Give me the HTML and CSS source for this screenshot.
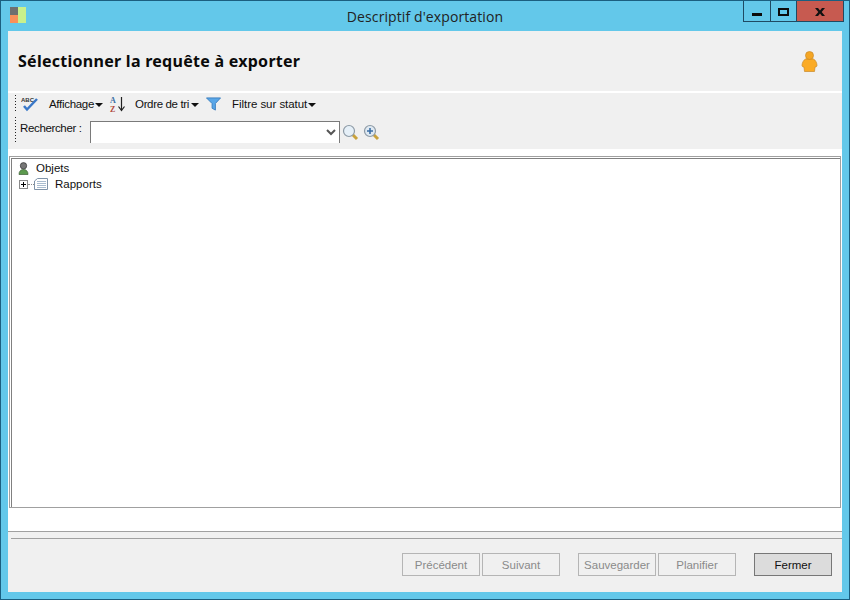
FILE: index.html
```html
<!DOCTYPE html>
<html lang="fr">
<head>
<meta charset="utf-8">
<title>Descriptif d'exportation</title>
<link rel="stylesheet" href="styles.css">
</head>
<body>
<div class="window">
  <div class="titlebar">
    <svg class="app-icon" width="17" height="17" viewBox="0 0 17 17"><rect width="8" height="8" fill="#6f6f6f"/><rect y="8" width="8" height="8" fill="#f9905a"/><rect x="8" width="8" height="16" fill="#c9f08c"/></svg>
    <div class="title">Descriptif d'exportation</div>
    <div class="controls">
      <div class="ctl ctl-min"><span class="min-glyph"></span></div>
      <div class="ctl ctl-max"><span class="max-glyph"></span></div>
      <div class="ctl ctl-close"><svg class="close-glyph" width="10" height="8" viewBox="0 0 10 8"><path d="M0 0h3l2 2.400L7 0h3L6.700 4 10 8H7L5 5.600 3 8H0l3.300-4z" fill="#111"/></svg></div>
    </div>
  </div>
  <div class="client">
    <header class="header">
      <h1 class="heading">Sélectionner la requête à exporter</h1>
      <svg class="user-icon" width="17" height="21" viewBox="0 0 17 21"><path d="M4.500 8h8c2 1 3.500 4 3.500 6.500 0 1-1 1.500-2 1.500l-.5 4.500h-10L3 16c-1 0-2-.5-2-1.500C1 12 2.500 9 4.500 8z" fill="#fbab25" stroke="#c98a2a" stroke-width=".7"/><circle cx="8.500" cy="4.500" r="4" fill="#f5a623" stroke="#c98a2a" stroke-width=".7"/></svg>
    </header>
    <div class="toolbars">
      <div class="toolrow row-one">
        <svg class="abc" width="18" height="16" viewBox="0 0 18 16"><text x="0" y="6" class="abc-text">ABC</text><path d="M3 10l3 3.500L16 3" fill="none" stroke="#3a78c8" stroke-width="2.500"/></svg>
        <span class="tool t-aff">Affichage<i class="caret"></i></span>
        <svg class="az" width="18" height="20" viewBox="0 0 18 20"><text x="1" y="8.500" class="az-a">A</text><text x="1" y="17.700" class="az-z">Z</text><path d="M12.500 3v13M9.500 12.500l3 4 3-4" fill="none" stroke="#222" stroke-width="1.200"/></svg>
        <span class="tool t-ord">Ordre de tri<i class="caret"></i></span>
        <svg class="funnel" width="15" height="14" viewBox="0 0 16 14"><path d="M.5 .5h15L10 6.500V13.500L6.500 11.500V6.500z" fill="#5aa7e8" stroke="#3c7fc0"/></svg>
        <span class="tool t-fil">Filtre sur statut<i class="caret"></i></span>
      </div>
      <div class="toolrow row-two">
        <label class="search-label">Rechercher :</label>
        <div class="combo"><svg width="10" height="7" viewBox="0 0 10 7"><path d="M1 1l4 4 4-4" fill="none" stroke="#555" stroke-width="2"/></svg></div>
        <svg class="lens" width="17" height="17" viewBox="0 0 17 17"><path d="M10 10l5 5" stroke="#c9a23c" stroke-width="3"/><circle cx="7" cy="7" r="5.500" fill="#e6f0f8" stroke="#8d9aa5" stroke-width="1.200"/></svg>
        <svg class="lens lens-plus" width="17" height="17" viewBox="0 0 17 17"><path d="M10 10l5 5" stroke="#c9a23c" stroke-width="3"/><circle cx="7" cy="7" r="5.500" fill="#dfe9f2" stroke="#8d9aa5" stroke-width="1.200"/><path d="M4 7h6M7 4v6" stroke="#3a6ea5" stroke-width="1.600"/></svg>
      </div>
    </div>
    <div class="tree-wrap">
      <div class="tree">
        <div class="node node-root">
          <svg width="11" height="13" viewBox="0 0 11 13"><path d="M1 12.500c0-3 1.500-5 4.500-5s4.500 2 4.500 5z" fill="#5c9a4e" stroke="#3d5f36" stroke-width=".7"/><circle cx="5.500" cy="3.800" r="3.200" fill="#777" stroke="#333" stroke-width=".7"/></svg>
          <span>Objets</span>
        </div>
        <div class="node node-child">
          <span class="expander"></span><span class="dots"></span>
          <svg class="doc" width="14" height="12" viewBox="0 0 14 12"><path d="M3.500 .5h10v11H.5V3z" fill="#fff" stroke="#7f93a8"/><path d="M3 3.500h9M3 5.500h9M3 7.500h9M3 9.500h9" stroke="#a9bccf"/></svg>
          <span>Rapports</span>
        </div>
      </div>
    </div>
    <footer class="footer">
      <div class="footer-rule"></div>
      <div class="buttons">
        <button class="btn" disabled>Précédent</button>
        <button class="btn" disabled>Suivant</button>
        <button class="btn btn-gap" disabled>Sauvegarder</button>
        <button class="btn" disabled>Planifier</button>
        <button class="btn btn-close">Fermer</button>
      </div>
    </footer>
  </div>
</div>
</body>
</html>
```

FILE: styles.css
```css
* { box-sizing: border-box; }
html, body { margin: 0; padding: 0; }
body { width: 850px; height: 600px; overflow: hidden; font-family: "Liberation Sans", Arial, sans-serif; font-size: 11.5px; color: #111; }
.window { width: 850px; height: 600px; background: #63c8ea; border: 1px solid #1b5f80; display: flex; flex-direction: column; padding: 0 7px 7px; }
.titlebar { height: 30px; display: flex; align-items: flex-start; position: relative; flex: none; }
.app-icon { margin: 6px 0 0 2px; flex: none; }
.title { position: absolute; left: 0; right: 0; top: 7px; text-align: center; font-family: "Open Sans", sans-serif; font-size: 14px; line-height: 18px; letter-spacing: .1px; color: #222; }
.controls { margin-left: auto; margin-right: -2px; display: flex; height: 21px; position: relative; border: 1px solid #1f4a63; border-top: 0; }
.ctl { display: flex; align-items: center; justify-content: center; height: 20px; }
.ctl-min { width: 27px; border-right: 1px solid #1f4a63; }
.ctl-max { width: 26px; border-right: 1px solid #1f4a63; }
.ctl-close { width: 46px; background: #c75a50; }
.min-glyph { width: 10px; height: 3px; background: #0c0c0c; margin-top: 7px; }
.max-glyph { width: 11px; height: 8px; border: 2px solid #0c0c0c; margin-top: 2px; }
.close-glyph { margin-top: 2px; }
.client { flex: 1; background: #fff; display: flex; flex-direction: column; min-height: 0; }
.header { height: 60px; background: #f0f0f0; display: flex; align-items: center; justify-content: space-between; padding: 0 24px 0 10px; flex: none; }
.heading { margin: 0; font-family: "Noto Sans", sans-serif; font-size: 16px; font-weight: 700; letter-spacing: .27px; color: #0a0a0a; }
.toolbars { margin-top: 2px; height: 56px; background: #f0f0f0; padding: 0 0 0 7px; flex: none; }
.toolrow { display: flex; align-items: center; position: relative; }
.row-one { height: 24px; padding: 0 0 2px 6px; }
.row-one::before { content: ""; position: absolute; left: 0; top: 2px; height: 18px; width: 1px; background: repeating-linear-gradient(#222 0 1px, transparent 1px 3px); }
.row-two { height: 26px; padding: 4px 0 0 5px; }
.row-two::before { content: ""; position: absolute; left: 0; top: 0; height: 26px; width: 1px; background: repeating-linear-gradient(#222 0 1px, transparent 1px 3px); }
.tool { display: inline-flex; align-items: center; }
.caret { display: inline-block; width: 0; height: 0; margin-left: 1px; margin-top: 2px; border: 4px solid transparent; border-top-color: #111; border-bottom: 0; }
.abc { flex: none; }
.abc-text { font: 700 6px "Liberation Sans", sans-serif; fill: #333; }
.t-aff { margin-left: 10px; letter-spacing: -.3px; }
.az { margin-left: 6px; flex: none; }
.az-a { font: 700 8px "Liberation Serif", serif; fill: #3a6ea5; }
.az-z { font: 700 8px "Liberation Serif", serif; fill: #b0483c; }
.t-ord { margin-left: 8px; letter-spacing: -.35px; }
.t-ord .caret { margin-left: 2px; }
.funnel { margin-left: 7px; flex: none; }
.t-fil { margin-left: 11px; letter-spacing: -.05px; }
.search-label { width: 70px; flex: none; letter-spacing: -.35px; margin-top: -8px; }
.combo { width: 250px; height: 22px; background: #fff; border: 1px solid #7a7a7a; border-bottom: 0; display: flex; align-items: center; justify-content: flex-end; padding-right: 3px; }
.lens { margin-left: 2px; flex: none; }
.lens-plus { margin-left: 4px; }
.tree-wrap { padding: 7px 1px 23px; flex: none; }
.tree { height: 352px; border: 1px solid #a0a0a0; box-shadow: inset 1px 1px 0 #fff, inset 2px 2px 0 #808080; padding: 3px 0 0 8px; background: #fff; }
.node { display: flex; align-items: center; height: 16px; }
.node-root svg { margin-right: 7px; }
.node-child { padding-left: 1px; }
.expander { width: 9px; height: 9px; border: 1px solid #8a8a8a; background: linear-gradient(#000,#000) center/5px 1px no-repeat, linear-gradient(#000,#000) center/1px 5px no-repeat, #fff; }
.dots { width: 6px; border-top: 1px dotted #8a8a8a; }
.doc { margin-right: 7px; }
.footer { flex: 1; background: #f0f0f0; border-top: 1px solid #a0a0a0; min-height: 0; display: flex; flex-direction: column; }
.footer-rule { margin: 6px 0 0 3px; height: 1px; background: #a0a0a0; flex: none; }
.buttons { display: flex; justify-content: flex-end; padding: 14px 10px 0 0; }
.btn { width: 78px; height: 23px; padding: 0; border: 1px solid #b5b5b5; background: #f0f0f0; color: #8a8a8a; font: 11.5px "Liberation Sans", sans-serif; margin-left: 2px; }
.btn-gap { margin-left: 18px; }
.btn-close { margin-left: 18px; background: #dcdcdc; color: #111; border-color: #777; }
```
